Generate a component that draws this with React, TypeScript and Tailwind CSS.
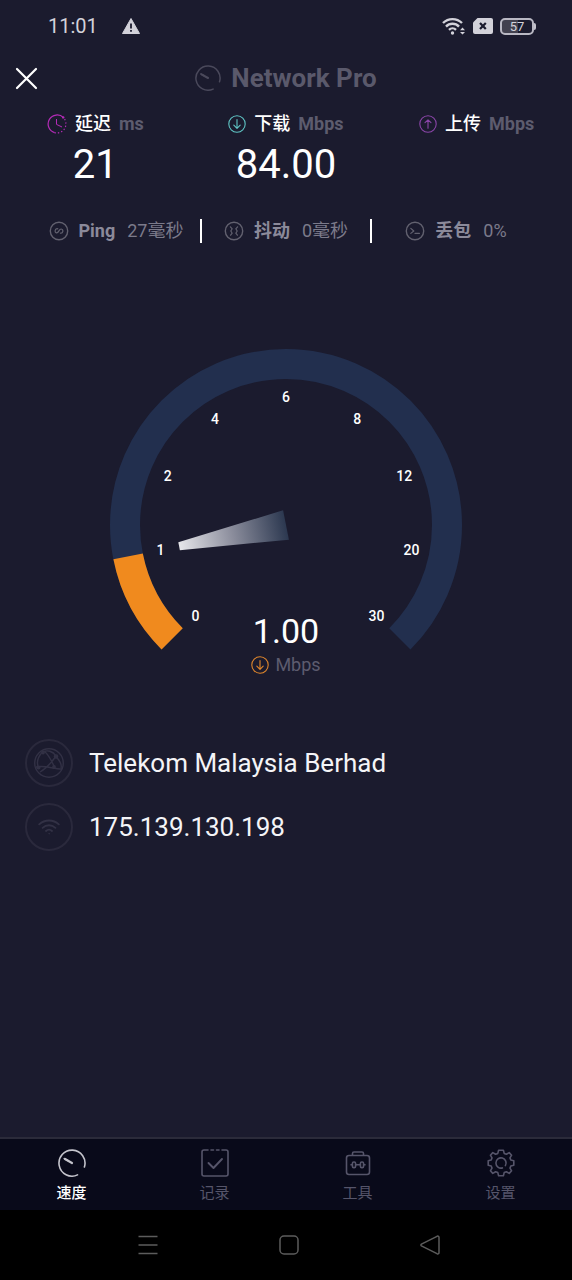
import type { ReactNode } from 'react'

const SCALE = [0, 1, 2, 4, 6, 8, 12, 20, 30]
const STEP = 270 / (SCALE.length - 1)
const CENTER = 176

const polar = (radius: number, deg: number) => {
    const rad = (deg * Math.PI) / 180
    return [CENTER + radius * Math.cos(rad), CENTER + radius * Math.sin(rad)]
}

const arc = (radius: number, from: number, to: number) => {
    const [x1, y1] = polar(radius, from)
    const [x2, y2] = polar(radius, to)
    return `M${x1} ${y1}A${radius} ${radius} 0 ${to - from > 180 ? 1 : 0} 1 ${x2} ${y2}`
}

function MeterIcon({ className }: { className: string }) {
    return (
        <svg viewBox="0 0 28 28" fill="none" stroke="currentColor" strokeWidth="1.6" strokeLinecap="round" className={className}>
            <path d="M26.4 18A13 13 0 1 0 19.5 25.9" />
            <path d="M7 10L14 14" strokeWidth="2.2" />
            <path d="M6.2 9.6L10 11.6" />
        </svg>
    )
}

function ArrowCircle({ up, className }: { up?: boolean; className: string }) {
    return (
        <svg viewBox="0 0 18 18" fill="none" stroke="currentColor" strokeLinecap="round" strokeLinejoin="round" className={className}>
            <circle cx="9" cy="9" r="8.2" strokeWidth="1.1" />
            <path d={up ? 'M9 13.2V4.8M6 7.6L9 4.8L12 7.6' : 'M9 4.6V13.2M5.8 10.2L9 13.4L12.2 10.2'} strokeWidth="1.1" />
        </svg>
    )
}

function LatencyIcon() {
    return (
        <svg viewBox="0 0 20 20" fill="none" stroke="currentColor" strokeWidth="1.2" className="size-5 text-[#b52bb8]">
            <path d="M16.5 3.6A9 9 0 1 0 7.6 18.6" />
            <path d="M7.6 18.6A9 9 0 0 0 17.2 4.6" strokeDasharray="1.3 2" />
            <path d="M9.5 5V10.4L15 13" strokeWidth="1" />
            <circle cx="16.2" cy="3.4" r="1.2" fill="currentColor" stroke="none" />
        </svg>
    )
}

function RingIcon({ children }: { children: ReactNode }) {
    return (
        <svg viewBox="0 0 20 20" fill="none" stroke="currentColor" strokeWidth="1.2" strokeLinecap="round" strokeLinejoin="round" className="size-5 text-[#62616f]">
            <circle cx="10" cy="10" r="8.7" strokeWidth="1.4" />
            {children}
        </svg>
    )
}

function Stat({ icon, label, unit, value }: { icon: ReactNode; label: string; unit: string; value?: string }) {
    return (
        <div className="flex flex-col items-center">
            <div className="flex h-7 items-center gap-2 text-lg">
                {icon}
                <span className="font-medium text-white">{label}</span>
                <span className="font-bold text-[#5d5c6e]">{unit}</span>
            </div>
            <div className="h-12 text-[40px] leading-[54px] text-white">{value}</div>
        </div>
    )
}

function Detail({ icon, label, value }: { icon: ReactNode; label: string; value: string }) {
    return (
        <div className="flex flex-1 items-center justify-center gap-3 whitespace-nowrap text-lg leading-6">
            <span className="flex items-center gap-2.5">
                {icon}
                <span className="font-bold text-[#8b8a9a]">{label}</span>
            </span>
            <span className="text-[#7b7a8a]">{value}</span>
        </div>
    )
}

function Gauge() {
    return (
        <div className="relative mx-auto w-[352px]">
            <svg viewBox="0 0 352 302" className="block w-full" role="img" aria-label="1.00 Mbps">
                <defs>
                    <linearGradient id="needle" x1="0" x2="1" y1="0" y2="0">
                        <stop offset="0" stopColor="#e6e6ea" />
                        <stop offset="0.5" stopColor="#8b8d9c" />
                        <stop offset="1" stopColor="#2c3850" />
                    </linearGradient>
                </defs>
                <path d={arc(161, 135, 405)} fill="none" stroke="#222f4e" strokeWidth="30" />
                <path d={arc(161, 135, 135 + STEP)} fill="none" stroke="#f08a1e" strokeWidth="30" />
                <path d="M67 172L176 161V191L67 180Z" fill="url(#needle)" transform="rotate(-11.25 176 176)" />
                {SCALE.map((n, i) => {
                    const [x, y] = polar(128, 135 + i * STEP)
                    return (
                        <text key={n} x={x} y={y + 5} textAnchor="middle" className="fill-white text-sm font-medium">
                            {n}
                        </text>
                    )
                })}
            </svg>
            <div className="absolute inset-x-0 top-[262px] flex flex-col items-center">
                <span className="text-[34px] leading-10 text-white">1.00</span>
                <span className="flex items-center gap-1.5 text-lg leading-7 text-[#5d5c6e]">
                    <ArrowCircle className="size-[18px] text-[#e0872c]" />
                    Mbps
                </span>
            </div>
        </div>
    )
}

function InfoRow({ icon, text }: { icon: ReactNode; text: string }) {
    return (
        <div className="flex items-center gap-4">
            <div className="flex size-12 items-center justify-center rounded-full border-2 border-[#2a293c] text-[#323145]">{icon}</div>
            <span className="text-[26px] leading-8 text-[#f4f4f7]">{text}</span>
        </div>
    )
}

function Tab({ icon, label, active }: { icon: ReactNode; label: string; active?: boolean }) {
    return (
        <a href="#" className={active ? 'flex flex-col items-center gap-1 font-medium text-white' : 'flex flex-col items-center gap-1 text-[#56556a]'}>
            <span className={active ? 'text-[#c4c4cc]' : ''}>{icon}</span>
            <span className="text-[15px] leading-6">{label}</span>
        </a>
    )
}

function StatusBar() {
    return (
        <div className="flex h-[52px] items-center justify-between pr-9 pl-12 text-[#d3d2da]">
            <div className="flex items-center gap-6">
                <span className="text-xl">11:01</span>
                <svg viewBox="0 0 18 16" className="h-4 w-[18px]">
                    <path d="M9 0.5L17.5 15.5H0.5Z" fill="currentColor" stroke="currentColor" strokeLinejoin="round" />
                    <path d="M9 5.4V10.4M9 12V13.8" stroke="#1b1b2e" strokeWidth="1.8" />
                </svg>
            </div>
            <div className="flex items-center gap-[7px]">
                <svg viewBox="0 0 24 18" fill="none" stroke="currentColor" className="h-[18px] w-6">
                    <path d="M1 6A13.5 13.5 0 0 1 20 6M4 9.6A9 9 0 0 1 17 9.6M7 12.8A5 5 0 0 1 14 12.8" strokeWidth="2.4" />
                    <circle cx="10.5" cy="16" r="1.7" fill="currentColor" stroke="none" />
                    <path d="M18 13.2L20.5 10.6L23 13.2ZM18 15L20.5 17.6L23 15Z" fill="currentColor" stroke="none" />
                </svg>
                <svg viewBox="0 0 20 16" className="h-4 w-5">
                    <path d="M4.5 0H18Q20 0 20 2V14Q20 16 18 16H2Q0 16 0 14V4.5Z" fill="currentColor" />
                    <path d="M7 5L12.8 11M12.8 5L7 11" stroke="#1b1b2e" strokeWidth="2.2" />
                </svg>
                <div className="flex items-center">
                    <div className="flex h-[17px] w-[34px] items-center justify-center rounded-[5px] border-2 border-[#b9b8c3] bg-linear-to-r from-[#42414f] from-55% to-[#1b1b2e] to-55% text-[13px] leading-none">
                        57
                    </div>
                    <div className="h-[7px] w-0.5 rounded-r-sm bg-[#c3c2cc]" />
                </div>
            </div>
        </div>
    )
}

export default function App() {
    return (
        <div className="flex min-h-screen flex-col bg-[#1b1b2e] font-[Roboto,'Noto_Sans_CJK_SC',sans-serif]">
            <StatusBar />

            <header className="grid h-[52px] grid-cols-[40px_1fr_40px] items-center px-3.5">
                <button type="button" aria-label="关闭" className="text-white">
                    <svg viewBox="0 0 24 24" fill="none" stroke="currentColor" strokeWidth="2.2" strokeLinecap="round" className="size-6">
                        <path d="M3 3L22 22M22 3L3 22" />
                    </svg>
                </button>
                <h1 className="flex items-center justify-center gap-2.5 text-[26px] font-bold text-[#5a596b]">
                    <MeterIcon className="size-[26px] text-[#4a495b]" />
                    Network Pro
                </h1>
            </header>

            <main className="flex flex-1 flex-col">
                <section className="grid grid-cols-3 pt-1.5">
                    <Stat icon={<LatencyIcon />} label="延迟" unit="ms" value="21" />
                    <Stat icon={<ArrowCircle className="size-[18px] text-[#5fc4c4]" />} label="下载" unit="Mbps" value="84.00" />
                    <Stat icon={<ArrowCircle up className="size-[18px] text-[#8a45a8]" />} label="上传" unit="Mbps" />
                </section>

                <section className="mt-[33px] flex h-6 divide-x-2 divide-white px-8">
                    <Detail
                        icon={
                            <RingIcon>
                                <path d="M8.8 7.8C6 7 5.2 11.4 7.4 11.8C10 12.2 9.8 7.8 12.2 8C14.8 8.4 14.2 12.6 11.4 12.2" />
                            </RingIcon>
                        }
                        label="Ping"
                        value="27毫秒"
                    />
                    <Detail
                        icon={
                            <RingIcon>
                                <path d="M6.4 5.8L8.2 7.8L6.8 10L8.2 12.2L6.6 14.2M13.6 5.8L11.8 7.8L13.2 10L11.8 12.2L13.4 14.2" />
                            </RingIcon>
                        }
                        label="抖动"
                        value="0毫秒"
                    />
                    <Detail
                        icon={
                            <RingIcon>
                                <path d="M5.8 7.4L8.8 10L5.8 12.4M10 12.4H14.4" />
                            </RingIcon>
                        }
                        label="丢包"
                        value="0%"
                    />
                </section>

                <section className="mt-[106px]">
                    <Gauge />
                </section>

                <section className="mt-[88px] flex flex-col gap-4 px-[25px] pb-10">
                    <InfoRow
                        icon={
                            <svg viewBox="0 0 32 32" fill="none" stroke="currentColor" strokeWidth="1.4" className="size-8 shrink-0">
                                <circle cx="16" cy="16" r="14.3" />
                                <path d="M9 5.5C4 11 3.5 17 6 22M11 4C16 8 18 13 21 19M23 9C20 13 16 20 7 25M22 9C27 13 29 18 28 21M3 20C12 18 20 22 29 22M10 5C14 2.6 20 4 23 9" />
                                <circle cx="23" cy="9.5" r="1.6" fill="currentColor" />
                                <circle cx="10" cy="5.5" r="1.2" fill="currentColor" />
                                <circle cx="5.5" cy="20.5" r="1.4" fill="currentColor" />
                                <circle cx="21" cy="20" r="1.2" fill="currentColor" />
                            </svg>
                        }
                        text="Telekom Malaysia Berhad"
                    />
                    <InfoRow
                        icon={
                            <svg viewBox="0 0 22 16" fill="none" stroke="currentColor" strokeWidth="1.8" strokeLinecap="round" className="h-4 w-[22px]">
                                <path d="M1.2 5.4C6.8 0.2 15.2 0.2 20.8 5.4M4.6 8.8C8.4 5.4 13.6 5.4 17.4 8.8M8 12C9.8 10.4 12.2 10.4 14 12" />
                                <circle cx="11" cy="14.8" r="0.4" strokeWidth="0.8" />
                            </svg>
                        }
                        text="175.139.130.198"
                    />
                </section>
            </main>

            <nav className="grid h-[73px] grid-cols-4 border-t-2 border-[#2b2b3a] bg-[#090a1a] pt-2.5">
                <Tab active icon={<MeterIcon className="size-7" />} label="速度" />
                <Tab
                    icon={
                        <svg viewBox="0 0 28 28" fill="none" stroke="currentColor" strokeWidth="1.6" strokeLinecap="round" strokeLinejoin="round" className="size-7">
                            <path d="M7 1H3Q1 1 1 3V25Q1 27 3 27H25Q27 27 27 25V3Q27 1 25 1H21M10 1H12.5M15.5 1H18" />
                            <path d="M7.5 14L12.5 19L21 10" strokeWidth="1.9" />
                        </svg>
                    }
                    label="记录"
                />
                <Tab
                    icon={
                        <svg viewBox="0 0 28 28" fill="none" stroke="currentColor" strokeWidth="1.6" strokeLinejoin="round" className="size-7">
                            <rect x="2.5" y="6.5" width="23" height="19" rx="2.5" />
                            <path d="M8.5 6.5V4.5Q8.5 3 10 3H18Q19.5 3 19.5 4.5V6.5" />
                            <rect x="8.4" y="13" width="3.2" height="5.6" rx="1.4" />
                            <rect x="16.4" y="13" width="3.2" height="5.6" rx="1.4" />
                            <path d="M6.4 15.8H8.4M11.6 15.8H16.4M19.6 15.8H21.6" />
                        </svg>
                    }
                    label="工具"
                />
                <Tab
                    icon={
                        <svg viewBox="0 0 28 28" fill="none" stroke="currentColor" strokeWidth="1.6" strokeLinecap="round" strokeLinejoin="round" className="size-7">
                            <path d="M11.6 1.2H16.4L17.2 4.4L19.4 5.3L22.2 3.6L24.6 6.2L23 8.9L23.8 11L26.8 11.7V16.3L23.8 17L23 19.1L24.6 21.8L22.2 24.4L19.4 22.7L17.2 23.6L16.4 26.8H11.6L10.8 23.6L8.6 22.7L5.8 24.4L3.4 21.8L5 19.1L4.2 17L1.2 16.3V11.7L4.2 11L5 8.9L3.4 6.2L5.8 3.6L8.6 5.3L10.8 4.4Z" />
                            <path d="M18.4 16.6A5.1 5.1 0 1 0 15.4 18.9" />
                        </svg>
                    }
                    label="设置"
                />
            </nav>

            {/* Android system keys */}
            <div className="grid h-[70px] grid-cols-3 place-items-center bg-black pr-[72px] pl-[78px] text-[#5c5c5c]">
                <button type="button" aria-label="最近任务">
                    <svg viewBox="0 0 20 20" fill="none" stroke="currentColor" strokeWidth="1.5" className="size-5">
                        <path d="M0.5 1.5H19.5M0.5 10H19.5M0.5 18.5H19.5" />
                    </svg>
                </button>
                <button type="button" aria-label="主屏幕">
                    <svg viewBox="0 0 20 20" fill="none" stroke="currentColor" strokeWidth="1.5" className="size-5">
                        <rect x="1" y="1" width="18" height="18" rx="4" />
                    </svg>
                </button>
                <button type="button" aria-label="返回">
                    <svg viewBox="0 0 20 20" fill="none" stroke="currentColor" strokeWidth="1.5" strokeLinejoin="round" className="size-5">
                        <path d="M1.4 9.2L17 1.3Q19 0.6 19 2.6V17.4Q19 19.4 17 18.7L1.4 10.8Q0.4 10 1.4 9.2Z" />
                    </svg>
                </button>
            </div>
        </div>
    )
}
